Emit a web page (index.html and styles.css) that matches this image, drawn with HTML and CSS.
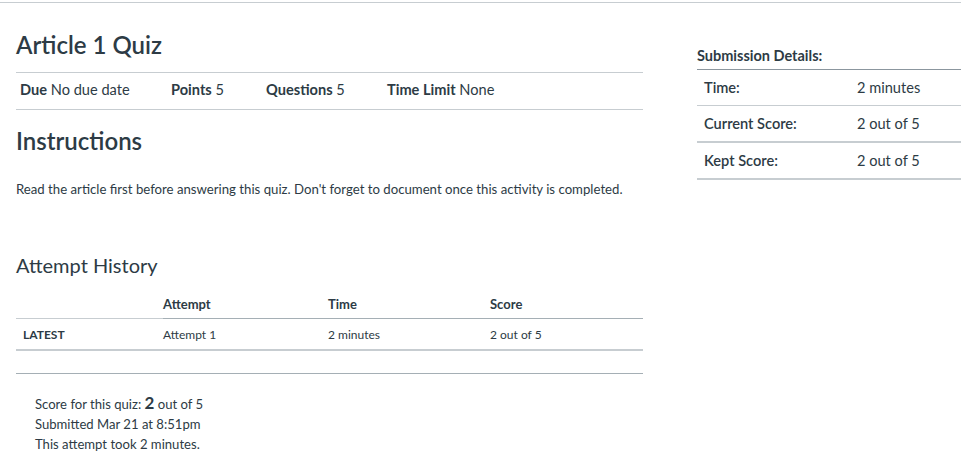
FILE: index.html
```html
<!DOCTYPE html>
<html>
<head>
<meta charset="utf-8">
<link rel="stylesheet" href="styles.css">
</head>
<body>
<div class="topbar"></div>
<div class="page">
  <main class="main">
    <h1 class="title">Article 1 Quiz</h1>
    <ul class="details">
      <li class="d-due"><b>Due</b> No due date</li>
      <li class="d-points"><b>Points</b> 5</li>
      <li class="d-questions"><b>Questions</b> 5</li>
      <li class="d-limit"><b>Time Limit</b> None</li>
    </ul>
    <h2 class="instr">Instructions</h2>
    <p class="desc">Read the article first before answering this quiz. Don't forget to document once this activity is completed.</p>
    <h3 class="history">Attempt History</h3>
    <table class="attempts">
      <thead>
        <tr><th class="c0"></th><th class="c1">Attempt</th><th class="c2">Time</th><th class="c3">Score</th></tr>
      </thead>
      <tbody>
        <tr><td class="c0 latest">LATEST</td><td class="c1">Attempt 1</td><td class="c2">2 minutes</td><td class="c3">2 out of 5</td></tr>
      </tbody>
    </table>
    <div class="sep"></div>
    <div class="summary">
      <div>Score for this quiz: <span class="big">2</span> out of 5</div>
      <div>Submitted Mar 21 at 8:51pm</div>
      <div>This attempt took 2 minutes.</div>
    </div>
  </main>
  <aside class="side">
    <div class="side-title">Submission Details:</div>
    <div class="srow r1"><span class="sl">Time:</span><span class="sv">2 minutes</span></div>
    <div class="srow r2"><span class="sl">Current Score:</span><span class="sv">2 out of 5</span></div>
    <div class="srow r2"><span class="sl">Kept Score:</span><span class="sv">2 out of 5</span></div>
  </aside>
</div>
</body>
</html>
```
FILE: styles.css
```css
html, body { margin: 0; padding: 0; background: #fff; }
body { font-family: Lato, "Open Sans", sans-serif; color: #2d3b45; }
.topbar { height: 1px; width: 961px; background: #c7cdd1; margin-top: 2px; }
.page { display: flex; padding-left: 16px; }
.main { width: 627px; }
.side { width: 264px; margin-left: 54px; padding-top: 40px; }
.title { font-size: 24px; font-weight: 600; margin: 27px 0 0 0; line-height: 30px; height: 42px; border-bottom: 1px solid #c7cdd1; }
.details { list-style: none; margin: 0; padding: 0 0 3px 4px; display: flex; height: 33px; align-items: center; border-bottom: 1px solid #c7cdd1; font-size: 14.6px; }
.details b { font-weight: 700; }
.d-due { width: 151px; }
.d-points { width: 95px; }
.d-questions { width: 121px; }
.instr { font-size: 24px; font-weight: 600; margin: 0; padding-top: 16px; line-height: 30px; }
.desc { font-size: 13.2px; margin: 24px 0 0 0; line-height: 18px; }
.history { font-size: 20px; font-weight: 400; margin: 54px 0 0 0; line-height: 26px; }
.attempts { border-collapse: collapse; width: 627px; margin-top: 8px; font-size: 12px; }
.attempts th { font-weight: 700; font-size: 13px; text-align: left; height: 26px; padding: 0 0 6px 0; vertical-align: bottom; border-bottom: 1px solid #a5afb5; }
.attempts th.c0 { border-bottom-color: #c7cdd1; }
.attempts td { height: 30px; padding: 0; border-bottom: 2px solid #c7cdd1; vertical-align: middle; }
.c0 { width: 147px; }
.c1 { width: 165px; }
.c2 { width: 162px; }
.latest { padding-left: 7px !important; font-weight: 700; width: 140px; }
.sep { height: 1px; background: #a5afb5; margin-top: 22px; }
.summary { padding-left: 19px; padding-top: 19px; font-size: 13.1px; line-height: 20px; }
.summary .big { font-size: 17px; font-weight: 700; }
.side-title { font-size: 14.5px; font-weight: 700; height: 26px; line-height: 26px; border-bottom: 1px solid #8b969e; }
.srow { display: flex; height: 35px; align-items: center; font-size: 14.6px; padding-left: 7px; }
.r1 { border-bottom: 1px solid #c7cdd1; }
.r2 { border-bottom: 2px solid #c7cdd1; }
.sl { width: 153px; font-weight: 600; }
```
